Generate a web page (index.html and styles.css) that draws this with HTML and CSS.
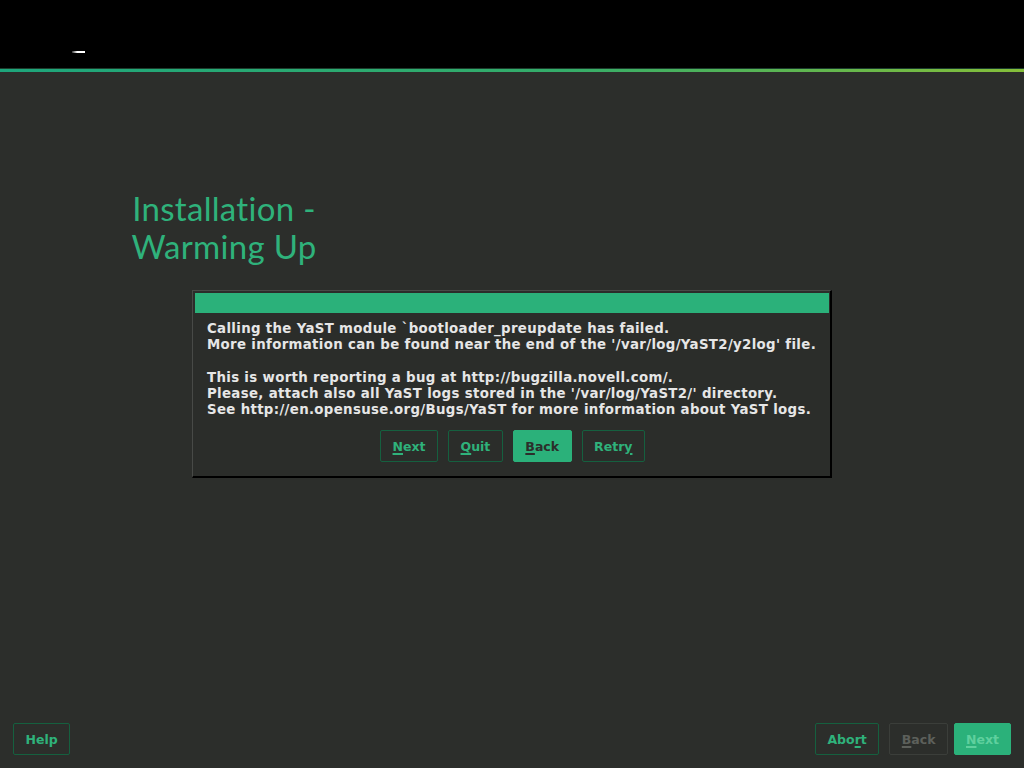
FILE: index.html
```html
<!DOCTYPE html>
<html>
<head>
<meta charset="utf-8">
<link rel="stylesheet" href="styles.css">
</head>
<body>
<div class="screen">
  <header class="topbar">
    <span class="logo-dash"></span>
  </header>
  <div class="accent"></div>
  <main class="main">
    <h1 class="title">Installation -<br>Warming Up</h1>
  </main>
  <footer class="footer">
    <button class="btn"><span>Help</span></button>
    <div class="footer-right">
      <button class="btn">Abo<u>r</u>t</button>
      <button class="btn btn-disabled"><u>B</u>ack</button>
      <button class="btn btn-primary btn-primary-dim btn-narrow"><u>N</u>ext</button>
    </div>
  </footer>
</div>
<div class="overlay">
  <div class="dialog">
    <div class="dialog-bar"></div>
    <div class="dialog-body">
      <p class="msg">Calling the YaST module `bootloader_preupdate has failed.<br>More information can be found near the end of the '/var/log/YaST2/y2log' file.<br><br>This is worth reporting a bug at http://bugzilla.novell.com/.<br>Please, attach also all YaST logs stored in the '/var/log/YaST2/' directory.<br>See http://en.opensuse.org/Bugs/YaST for more information about YaST logs.</p>
      <div class="dialog-buttons">
        <button class="btn"><u>N</u>ext</button>
        <button class="btn"><u>Q</u>uit</button>
        <button class="btn btn-primary"><u>B</u>ack</button>
        <button class="btn">Retr<u>y</u></button>
      </div>
    </div>
  </div>
</div>
</body>
</html>
```
FILE: styles.css
```css
html, body {
  margin: 0;
  padding: 0;
  height: 100%;
  background: #2c2e2b;
  font-family: "DejaVu Sans", sans-serif;
  overflow: hidden;
}
.screen {
  display: flex;
  flex-direction: column;
  height: 100vh;
}
.topbar {
  height: 68px;
  background: #000;
  display: flex;
  align-items: flex-end;
}
.logo-dash {
  display: block;
  width: 13px;
  height: 2px;
  margin: 0 0 15px 72px;
  background: linear-gradient(to right, rgba(255,255,255,0.2), #fff 40%);
}
.accent {
  height: 4px;
  background: linear-gradient(to right, #1ea67c 0%, #35ad6a 55%, #86bf3a 100%);
  border-top: 1px solid #1b3d2c;
  box-sizing: border-box;
}
.main {
  flex: 1;
}
.title {
  margin: 117px 0 0 99px;
  width: 250px;
  text-align: center;
  font-family: "Lato", "Open Sans", sans-serif;
  font-weight: 400;
  font-size: 33px;
  line-height: 38px;
  color: #2fb27b;
  letter-spacing: 0.3px;
}
.footer {
  display: flex;
  justify-content: space-between;
  align-items: center;
  padding: 0 13px 13px 13px;
}
.footer-right {
  display: flex;
  gap: 6px;
}
.footer-right .btn:first-child {
  margin-right: 4px;
}
.btn {
  height: 32px;
  padding: 0 11.5px;
  background: transparent;
  border: 1px solid #15603f;
  border-radius: 2px;
  color: #2fb27b;
  font-family: "DejaVu Sans", sans-serif;
  font-weight: bold;
  font-size: 12.5px;
  cursor: pointer;
}
.btn-narrow {
  padding: 0 11px;
}
.btn u {
  text-decoration-thickness: 2px;
  text-underline-offset: 2px;
}
.btn-primary {
  background: #2bb17a;
  border-color: #2bb17a;
  color: #2c2e2b;
}
.btn-primary-dim {
  color: #5fd09e;
}
.btn-disabled {
  border-color: #3b3e3a;
  color: #5d605b;
}
.overlay {
  position: fixed;
  inset: 0;
  display: flex;
  align-items: center;
  justify-content: center;
}
.dialog {
  width: 635px;
  padding: 2px 0 0 2px;
  background: #2b2d2a;
  border-top: 1px solid #484a47;
  border-left: 1px solid #484a47;
  border-right: 2px solid #000;
  border-bottom: 2px solid #000;
}
.dialog-bar {
  height: 20px;
  margin-right: 1px;
  background: #2bb17a;
}
.dialog-body {
  padding: 8px 12px 14px 12px;
}
.msg {
  margin: 0;
  font-size: 13.33px;
  font-weight: bold;
  letter-spacing: 0.33px;
  line-height: 16.2px;
  color: #e6e6e6;
  white-space: nowrap;
}
.dialog-buttons {
  display: flex;
  justify-content: center;
  gap: 10px;
  margin-top: 12px;
}
```
